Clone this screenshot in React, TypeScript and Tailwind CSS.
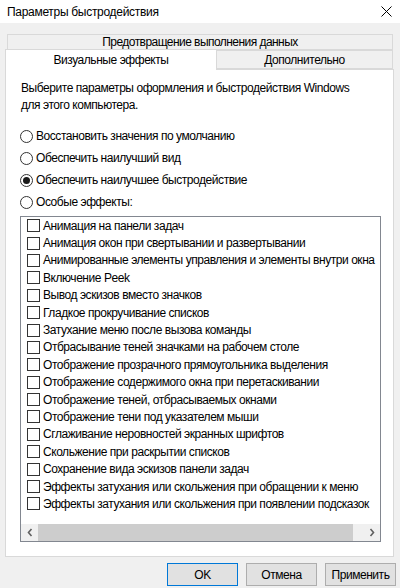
import React from "react";

const items = [
  "Анимация на панели задач",
  "Анимация окон при свертывании и развертывании",
  "Анимированные элементы управления и элементы внутри окна",
  "Включение Peek",
  "Вывод эскизов вместо значков",
  "Гладкое прокручивание списков",
  "Затухание меню после вызова команды",
  "Отбрасывание теней значками на рабочем столе",
  "Отображение прозрачного прямоугольника выделения",
  "Отображение содержимого окна при перетаскивании",
  "Отображение теней, отбрасываемых окнами",
  "Отображение тени под указателем мыши",
  "Сглаживание неровностей экранных шрифтов",
  "Скольжение при раскрытии списков",
  "Сохранение вида эскизов панели задач",
  "Эффекты затухания или скольжения при обращении к меню",
  "Эффекты затухания или скольжения при появлении подсказок",
];

const radios = [
  { label: "Восстановить значения по умолчанию", checked: false },
  { label: "Обеспечить наилучший вид", checked: false },
  { label: "Обеспечить наилучшее быстродействие", checked: true },
  { label: "Особые эффекты:", checked: false },
];

function Radio({ checked }: { checked: boolean }) {
  return (
    <span className="w-[13px] h-[13px] rounded-full border border-[#333333] bg-white flex items-center justify-center shrink-0">
      {checked && <span className="w-[7px] h-[7px] rounded-full bg-[#1a1a1a]" />}
    </span>
  );
}

function Chevron({ dir }: { dir: "left" | "right" }) {
  return (
    <svg width="6" height="9" viewBox="0 0 6 9">
      {dir === "left" ? (
        <polyline points="4.5,1 1.5,4.5 4.5,8" fill="none" stroke="#606060" strokeWidth="1.6" />
      ) : (
        <polyline points="1.5,1 4.5,4.5 1.5,8" fill="none" stroke="#606060" strokeWidth="1.6" />
      )}
    </svg>
  );
}

export default function App() {
  return (
    <div className="w-[400px] h-[588px] bg-[#f0f0f0] overflow-hidden flex flex-col text-[12px] tracking-[-0.45px] text-black font-['Liberation_Sans',sans-serif]">
      {/* Title bar */}
      <div className="h-[23px] bg-white flex items-center justify-between pl-[7px] pr-[8px] shrink-0">
        <span className="text-[12px] tracking-[-0.3px]">Параметры быстродействия</span>
        <svg width="11" height="11" viewBox="0 0 11 11">
          <line x1="0.5" y1="0.5" x2="10.5" y2="10.5" stroke="#000" strokeWidth="1" />
          <line x1="10.5" y1="0.5" x2="0.5" y2="10.5" stroke="#000" strokeWidth="1" />
        </svg>
      </div>

      {/* Tabs */}
      <div className="pt-[11px] shrink-0">
        <div className="ml-[7px] w-[386px] h-[16px] border border-[#d9d9d9] flex items-center justify-center leading-none tracking-[-0.55px]">
          Предотвращение выполнения данных
        </div>
        <div className="flex mt-[-1px]">
          <div className="ml-[5px] w-[212px] h-[21px] bg-white border border-b-0 border-[#d9d9d9] relative z-10 flex items-center justify-center pb-[1px]">
            Визуальные эффекты
          </div>
          <div className="w-[176px] h-[19px] mt-[1px] border border-l-0 border-[#d9d9d9] flex items-center justify-center pt-[1px]">
            Дополнительно
          </div>
        </div>
      </div>

      {/* Panel */}
      <div className="ml-[5px] w-[389px] h-[488px] mt-[-1px] bg-white border border-[#d9d9d9] shrink-0 flex flex-col">
        <div className="pl-[15px] pt-[10px] leading-[17px]">
          <div>Выберите параметры оформления и быстродействия Windows</div>
          <div>для этого компьютера.</div>
        </div>
        <div className="mt-[11px] flex flex-col">
          {radios.map((r) => (
            <div key={r.label} className="h-[22px] flex items-center gap-[3px] pl-[14px]">
              <Radio checked={r.checked} />
              <span>{r.label}</span>
            </div>
          ))}
        </div>
        <div className="mt-[3px] ml-[14px] w-[361px] h-[326px] border border-[#828790] flex flex-col overflow-hidden">
          <div className="flex-1 overflow-hidden">
            {items.map((t) => (
              <div key={t} className="h-[17.4px] flex items-center pl-[6px] gap-[3px] whitespace-nowrap">
                <span className="w-[13px] h-[13px] border border-[#333333] bg-white shrink-0" />
                <span>{t}</span>
              </div>
            ))}
          </div>
          <div className="h-[17px] flex bg-[#f0f0f0] shrink-0">
            <div className="w-[17px] flex items-center justify-center">
              <Chevron dir="left" />
            </div>
            <div className="w-[315px] bg-[#cdcdcd]" />
            <div className="flex-1" />
            <div className="w-[17px] flex items-center justify-center">
              <Chevron dir="right" />
            </div>
          </div>
        </div>
      </div>

      {/* Buttons */}
      <div className="flex justify-end gap-[8px] pr-[4px] pt-[6px]">
        <button className="w-[71px] h-[23px] bg-[#e1e1e1] border border-[#0078d7] flex items-center justify-center text-[12px]">
          OK
        </button>
        <button className="w-[71px] h-[23px] bg-[#e1e1e1] border border-[#adadad] flex items-center justify-center text-[12px]">
          Отмена
        </button>
        <button className="w-[71px] h-[23px] bg-[#e1e1e1] border border-[#adadad] flex items-center justify-center text-[12px]">
          Применить
        </button>
      </div>
    </div>
  );
}
